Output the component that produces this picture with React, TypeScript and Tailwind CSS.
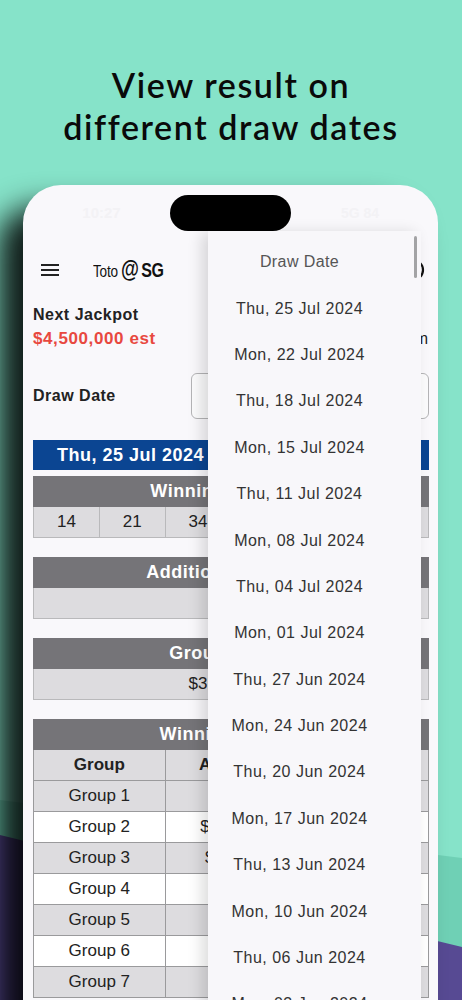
import { CircleHelp } from "lucide-react"

const drawDates = [
  "Thu, 25 Jul 2024",
  "Mon, 22 Jul 2024",
  "Thu, 18 Jul 2024",
  "Mon, 15 Jul 2024",
  "Thu, 11 Jul 2024",
  "Mon, 08 Jul 2024",
  "Thu, 04 Jul 2024",
  "Mon, 01 Jul 2024",
  "Thu, 27 Jun 2024",
  "Mon, 24 Jun 2024",
  "Thu, 20 Jun 2024",
  "Mon, 17 Jun 2024",
  "Thu, 13 Jun 2024",
  "Mon, 10 Jun 2024",
  "Thu, 06 Jun 2024",
  "Mon, 03 Jun 2024",
]

const numbers = ["14", "21", "34", "36", "41", "45"]

const shares = [
  { group: "Group 1", amount: "-", count: "-" },
  { group: "Group 2", amount: "$64,680", count: "6" },
  { group: "Group 3", amount: "$1,658", count: "152" },
  { group: "Group 4", amount: "$424", count: "403" },
  { group: "Group 5", amount: "$50", count: "8,291" },
  { group: "Group 6", amount: "$25", count: "11,305" },
  { group: "Group 7", amount: "$10", count: "138,877" },
]

function SectionHeader({ title }: { title: string }) {
  return (
    <div className="flex h-[31px] items-center justify-center bg-[#757478] text-[18px] font-bold tracking-[0.5px] text-white">
      {title}
    </div>
  )
}

export default function App() {
  return (
    <div className="relative h-[1000px] w-[462px] overflow-hidden bg-[#86e3c9] font-['Liberation_Sans',Arial,sans-serif]">
      {/* background shapes */}
      <svg className="absolute inset-0" width="462" height="1000" viewBox="0 0 462 1000">
        <polygon points="0,800 462,858 462,1000 0,1000" fill="#6fd0b5" />
        <polygon points="0,835 462,947 462,1000 0,1000" fill="#574a93" />
      </svg>

      <h1 className="relative pt-[64px] text-center font-['Lato',sans-serif] text-[34px] font-semibold leading-[42px] tracking-[1.6px] text-[#0a0a0a]">
        View result on
        <br />
        different draw dates
      </h1>

      {/* phone */}
      <div className="relative ml-[23px] mt-[37px] h-[900px] w-[415px] rounded-t-[38px] bg-[#f9f8fb] pl-[10px] pr-[9px] pt-[10px] shadow-[-25px_22px_30px_rgba(0,0,0,0.88)]">
        <div className="flex h-[36px] items-center">
          <span className="w-[137px] text-center text-[15px] font-bold text-[#f3f2f5]">10:27</span>
          <div className="relative z-30 h-[36px] w-[121px] rounded-full bg-black" />
          <span className="flex-1 text-center text-[14px] font-bold text-[#f3f2f5]">5G 84</span>
        </div>

        {/* app bar */}
        <div className="mt-[17px] flex h-[44px] items-center">
          <div className="ml-[8px] flex w-[18px] flex-col gap-[3px]">
            <span className="h-[2px] bg-[#222]" />
            <span className="h-[2px] bg-[#222]" />
            <span className="h-[2px] bg-[#222]" />
          </div>
          <div className="ml-[34px] w-[71px]">
            <div className="flex origin-left scale-x-[0.8] items-baseline whitespace-nowrap text-[#111]">
              <span className="text-[17px] tracking-[-0.3px]">Toto</span>
              <span className="ml-[4px] text-[23px] font-bold leading-none">@</span>
              <span className="ml-[3px] text-[20px] font-bold tracking-[-0.5px]">SG</span>
            </div>
          </div>
          <CircleHelp className="ml-auto mr-[4px] text-[#111]" size={24} strokeWidth={2.2} />
        </div>

        {/* jackpot */}
        <div className="mt-[11px] flex justify-between leading-[24px]">
          <div>
            <div className="text-[16px] font-bold tracking-[0.5px] text-[#222]">Next Jackpot</div>
            <div className="text-[17px] font-bold tracking-[0.6px] text-[#e8483f]">$4,500,000 est</div>
          </div>
          <div className="mr-[1px] text-[16px] text-[#222]">
            <div className="font-bold">Next Draw</div>
            <div>Mon, 29 Jul 2024, 6.30pm</div>
          </div>
        </div>

        {/* draw date select */}
        <div className="mt-[22px] flex items-center justify-between">
          <span className="text-[16px] font-bold tracking-[0.5px] text-[#222]">Draw Date</span>
          <div className="flex h-[46px] w-[238px] items-center justify-center rounded-[6px] border border-[#b4b4b6] bg-[#fbfbfc] text-[16px] text-[#222]">
            Thu, 25 Jul 2024
          </div>
        </div>

        {/* results */}
        <div className="mt-[21px] flex h-[30px] items-center justify-between bg-[#0b4592] px-[24px] text-[18px] font-bold tracking-[0.5px] text-white">
          <span>Thu, 25 Jul 2024</span>
          <span>Draw 4001</span>
        </div>

        <div className="mt-[6px]">
          <SectionHeader title="Winning Numbers" />
          <div className="grid h-[31px] grid-cols-6 border-b border-l border-[#b9b9bb] bg-[#dddcdf] text-[17px] text-[#222]">
            {numbers.map((n) => (
              <div key={n} className="flex items-center justify-center border-r border-[#b9b9bb]">
                {n}
              </div>
            ))}
          </div>
        </div>

        <div className="mt-[19px]">
          <SectionHeader title="Additional Number" />
          <div className="flex h-[31px] items-center justify-center border-x border-b border-[#b9b9bb] bg-[#dddcdf] text-[17px] text-[#222]">
            38
          </div>
        </div>

        <div className="mt-[19px]">
          <SectionHeader title="Group 1 Prize" />
          <div className="flex h-[31px] items-center justify-center border-x border-b border-[#b9b9bb] bg-[#dddcdf] text-[17px] text-[#222]">
            $3,245,870
          </div>
        </div>

        <div className="mt-[19px]">
          <SectionHeader title="Winning Shares" />
          <div className="grid h-[31px] grid-cols-3 border-b border-l border-[#9a9a9c] bg-[#dddcdf] text-[17px] font-bold text-[#222]">
            <div className="flex items-center justify-center border-r border-[#9a9a9c]">Group</div>
            <div className="flex items-center justify-center border-r border-[#9a9a9c]">Amount</div>
            <div className="flex items-center justify-center border-r border-[#9a9a9c]">Shares</div>
          </div>
          {shares.map((row, i) => (
            <div
              key={row.group}
              className={`grid h-[31px] grid-cols-3 border-b border-l border-[#9a9a9c] text-[17px] text-[#222] ${
                i % 2 === 0 ? "bg-[#dddcdf]" : "bg-white"
              }`}
            >
              <div className="flex items-center justify-center border-r border-[#9a9a9c]">{row.group}</div>
              <div className="flex items-center justify-center border-r border-[#9a9a9c]">{row.amount}</div>
              <div className="flex items-center justify-center border-r border-[#9a9a9c]">{row.count}</div>
            </div>
          ))}
        </div>

        {/* open draw date menu */}
        <div className="absolute left-[185px] top-[46px] z-20 h-[820px] w-[213px] bg-[#f8f7fa] pr-[30px] pt-[8px] shadow-[-6px_2px_14px_rgba(0,0,0,0.14)]">
          <div className="flex h-[46.4px] items-center justify-center text-[16px] tracking-[0.4px] text-[#555]">
            Draw Date
          </div>
          {drawDates.map((d) => (
            <div key={d} className="flex h-[46.4px] items-center justify-center text-[16px] tracking-[0.5px] text-[#333]">
              {d}
            </div>
          ))}
          <div className="absolute right-[4px] top-[5px] h-[42px] w-[3px] rounded-full bg-[#a3a3a5]" />
        </div>
      </div>
    </div>
  )
}
